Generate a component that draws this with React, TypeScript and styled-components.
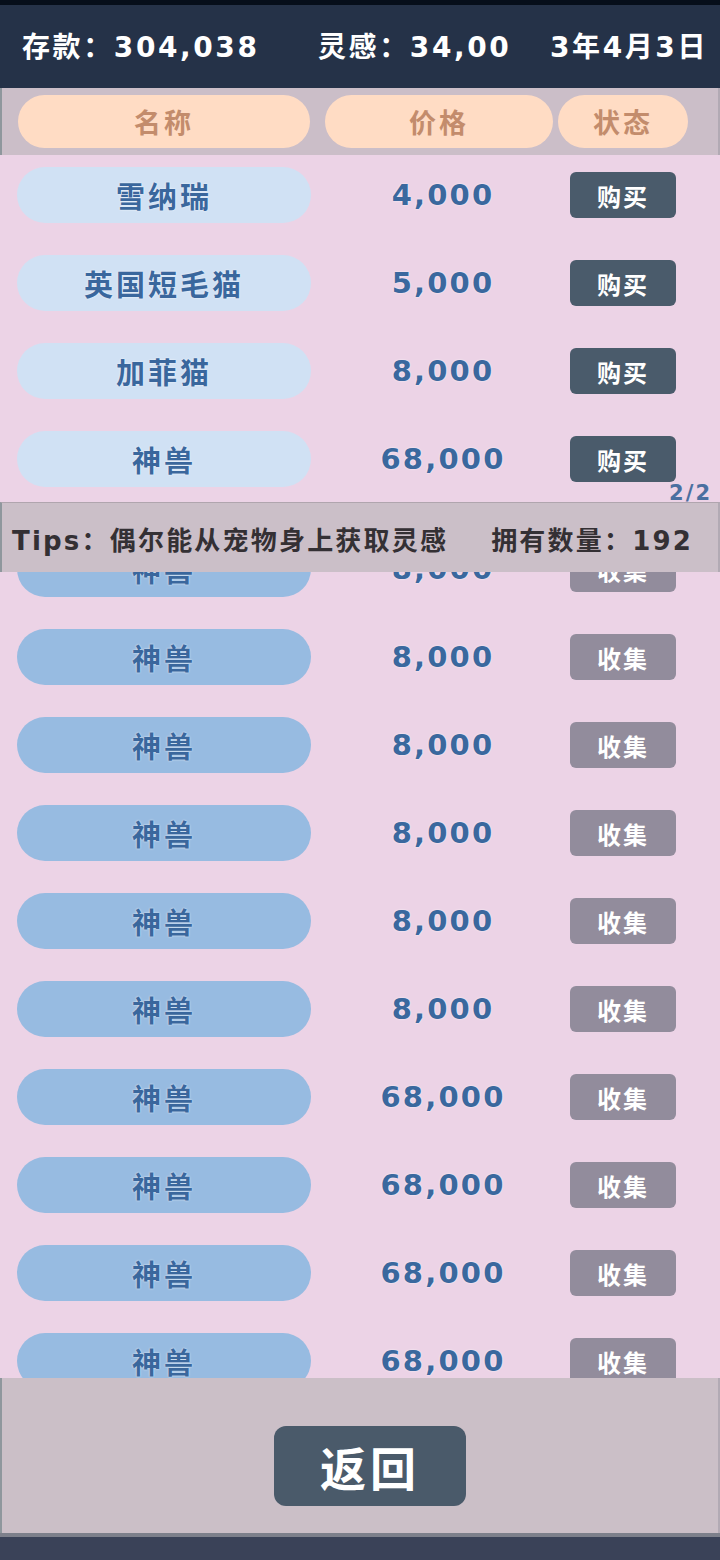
import { ReactElement } from 'react';
import styled, { createGlobalStyle } from 'styled-components';

const GlobalStyle = createGlobalStyle`
  html, body {
    margin: 0;
    padding: 0;
    background: #253248;
  }
  * {
    box-sizing: border-box;
  }
`;

const FONT = `"DejaVu Sans", "Noto Sans CJK SC", sans-serif`;

const Page = styled.div`
  width: 720px;
  height: 1560px;
  display: flex;
  flex-direction: column;
  overflow: hidden;
  font-family: ${FONT};
  font-weight: 700;
`;

const TopStrip = styled.div`
  height: 5px;
  background: #060e1a;
`;

const Header = styled.header`
  height: 83px;
  background: #253248;
  display: grid;
  grid-template-columns: 296px 232px auto;
  align-items: center;
  padding: 0 0 4px 22px;
  color: #ffffff;
  font-size: 28px;
`;

const Stat = styled.div`
  white-space: nowrap;
  letter-spacing: 2.6px;
`;

const ColumnBar = styled.div`
  height: 67px;
  background: #cbbec8;
  display: flex;
  align-items: center;
  padding-left: 16px;
  border-left: 2px solid #8f979d;
  border-right: 2px solid #b2aab4;
`;

const ColumnPill = styled.div<{ $w: number; $ml?: number }>`
  width: ${(p) => p.$w}px;
  margin-left: ${(p) => p.$ml ?? 0}px;
  height: 53px;
  border-radius: 27px;
  background: #ffdcc4;
  color: #c38c6c;
  font-size: 27px;
  letter-spacing: 3px;
  display: flex;
  align-items: center;
  justify-content: center;
`;

const ListArea = styled.div`
  height: 1223px;
  background: #ecd3e6;
  position: relative;
  overflow: hidden;
`;

const List = styled.div<{ $pt: number }>`
  display: flex;
  flex-direction: column;
  gap: 32px;
  padding-top: ${(p) => p.$pt}px;
`;

const Row = styled.div`
  height: 56px;
  display: grid;
  grid-template-columns: 294px 259px 106px;
  align-items: center;
  padding-left: 17px;
`;

const NamePill = styled.div<{ $owned: boolean }>`
  height: 56px;
  border-radius: 28px;
  background: ${(p) => (p.$owned ? '#97bbe1' : '#d0e1f4')};
  color: #3a679d;
  font-size: 29px;
  letter-spacing: 3px;
  display: flex;
  align-items: center;
  justify-content: center;
  text-shadow: 0 0 2px rgba(255, 255, 255, 0.9);
`;

const Price = styled.div`
  text-align: center;
  padding-left: 5px;
  color: #3a689e;
  font-size: 29px;
  letter-spacing: 2.2px;
  text-shadow: 0 0 2px rgba(255, 255, 255, 0.9);
`;

const ActionButton = styled.button<{ $owned: boolean }>`
  width: 106px;
  height: 46px;
  border: none;
  border-radius: 6px;
  background: ${(p) => (p.$owned ? '#928c9c' : '#4a5b6b')};
  color: #ffffff;
  font-family: ${FONT};
  font-weight: 700;
  font-size: 24px;
  letter-spacing: 2px;
  padding: 0;
  display: flex;
  align-items: center;
  justify-content: center;
`;

const Pager = styled.div`
  height: 54px;
  display: flex;
  justify-content: flex-end;
  align-items: flex-start;
  padding-right: 8px;
`;

const PageLabel = styled.span`
  margin-top: -6px;
  line-height: 24px;
  font-size: 21px;
  letter-spacing: 2px;
  color: #4a6fa0;
`;

const TipsBar = styled.div`
  position: absolute;
  top: 347px;
  left: 0;
  right: 0;
  height: 70px;
  background: #cbbfc8;
  border-top: 1px solid #b0a5ae;
  border-left: 2px solid #8f979d;
  border-right: 2px solid #b2aab4;
  display: flex;
  align-items: center;
  justify-content: space-between;
  padding: 2px 25px 0 10px;
  color: #343034;
  font-size: 26px;
  letter-spacing: 2.2px;
  z-index: 2;
`;

const Footer = styled.div`
  height: 155px;
  background: #cbbfc7;
  padding: 48px 0 0 272px;
  border-left: 2px solid #8f979d;
  border-right: 2px solid #b2aab4;
`;

const BackButton = styled.button`
  width: 192px;
  height: 80px;
  border: none;
  border-radius: 12px;
  background: #4a5a6a;
  color: #ffffff;
  font-family: ${FONT};
  font-weight: 700;
  font-size: 46px;
  letter-spacing: 4px;
  padding: 0;
  display: flex;
  align-items: center;
  justify-content: center;
`;

const NavBar = styled.div`
  height: 27px;
  background: #3a4258;
  border-top: 4px solid #7d808b;
`;

interface Pet {
  name: string;
  price: string;
}

const shop: Pet[] = [
  { name: '雪纳瑞', price: '4,000' },
  { name: '英国短毛猫', price: '5,000' },
  { name: '加菲猫', price: '8,000' },
  { name: '神兽', price: '68,000' },
];

const owned: Pet[] = [
  ...Array.from({ length: 6 }, () => ({ name: '神兽', price: '8,000' })),
  ...Array.from({ length: 4 }, () => ({ name: '神兽', price: '68,000' })),
];

const PetRow = ({ pet, isOwned }: { pet: Pet; isOwned: boolean }) => (
  <Row>
    <NamePill $owned={isOwned}>{pet.name}</NamePill>
    <Price>{pet.price}</Price>
    <ActionButton $owned={isOwned}>{isOwned ? '收集' : '购买'}</ActionButton>
  </Row>
);

const App = (): ReactElement => (
  <>
    <GlobalStyle />
    <Page>
      <TopStrip />
      <Header>
        <Stat>存款：304,038</Stat>
        <Stat>灵感：34,00</Stat>
        <Stat>3年4月3日</Stat>
      </Header>
      <ColumnBar>
        <ColumnPill $w={292}>名称</ColumnPill>
        <ColumnPill $w={228} $ml={15}>价格</ColumnPill>
        <ColumnPill $w={130} $ml={5}>状态</ColumnPill>
      </ColumnBar>
      <ListArea>
        <List $pt={12}>
          {shop.map((pet, i) => (
            <PetRow key={`shop-${i}`} pet={pet} isOwned={false} />
          ))}
        </List>
        <Pager>
          <PageLabel>2/2</PageLabel>
        </Pager>
        <List $pt={0}>
          {owned.map((pet, i) => (
            <PetRow key={`owned-${i}`} pet={pet} isOwned />
          ))}
        </List>
        <TipsBar>
          <span>Tips：偶尔能从宠物身上获取灵感</span>
          <span>拥有数量：192</span>
        </TipsBar>
      </ListArea>
      <Footer>
        <BackButton>返回</BackButton>
      </Footer>
      <NavBar />
    </Page>
  </>
);

export default App;
